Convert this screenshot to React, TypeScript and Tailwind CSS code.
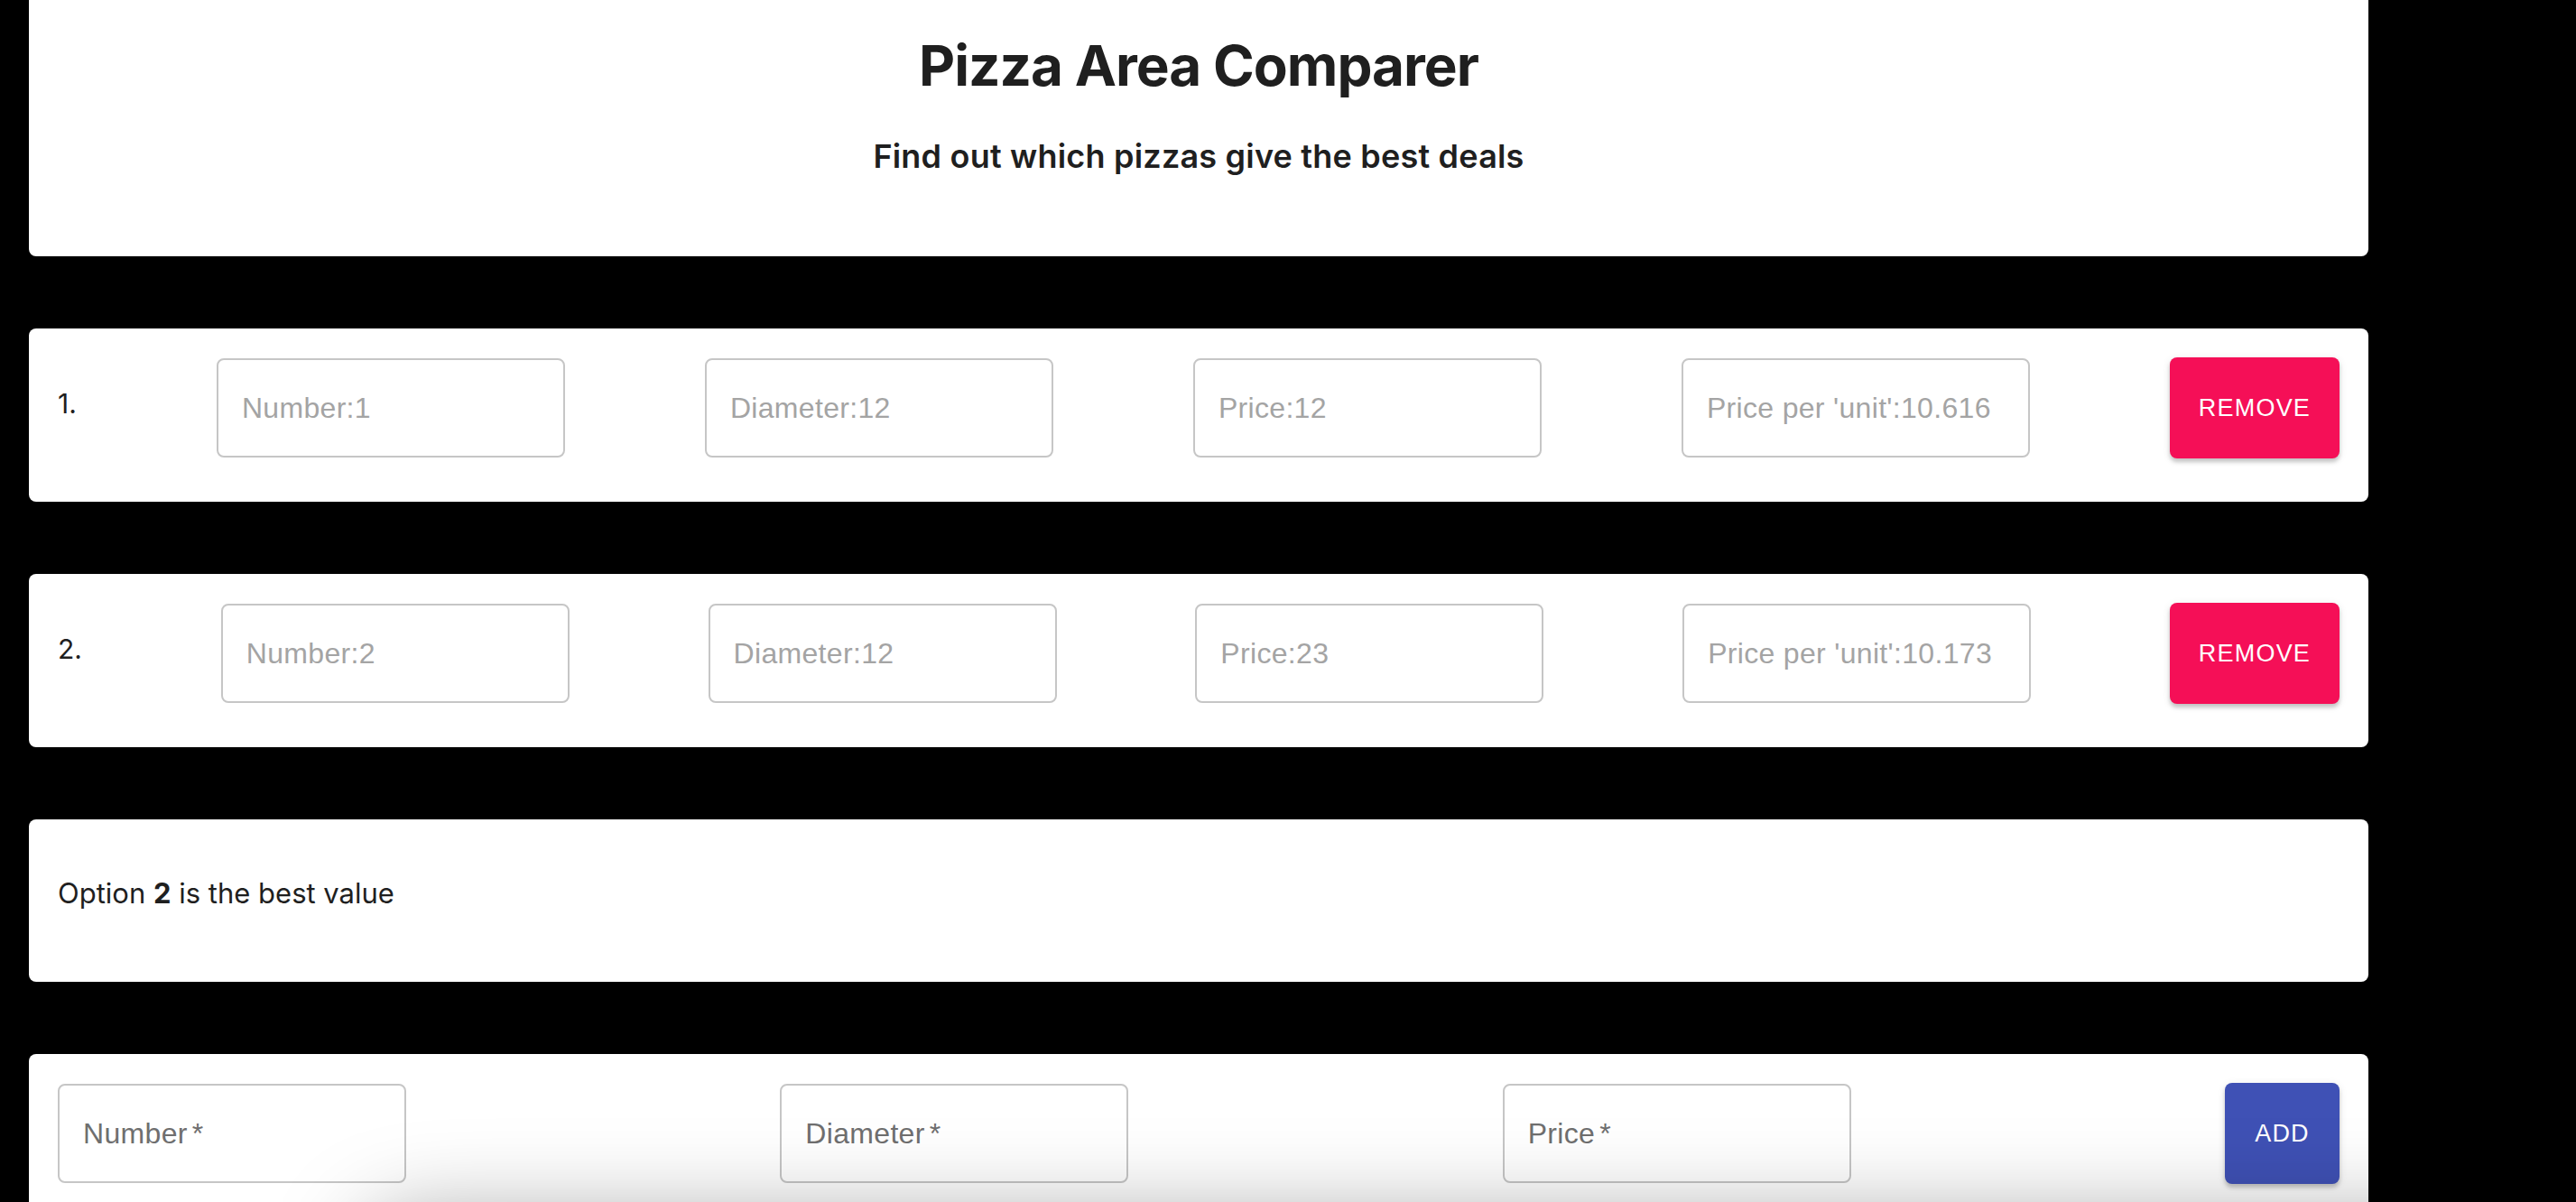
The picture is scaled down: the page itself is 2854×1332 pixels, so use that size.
const rows = [
  { n: 1, number: 1, diameter: 12, price: 12, unit: '10.616' },
  { n: 2, number: 2, diameter: 12, price: 23, unit: '10.173' },
]

const sans = "font-['Inter',sans-serif]"
const helv = "font-['Liberation_Sans','Helvetica',Arial,sans-serif]"

function Field({ placeholder, label }: { placeholder?: string; label?: string }) {
  return (
    <div className="relative w-[386px] h-[110px] rounded-lg border-2 border-[#c6c6c6] bg-transparent flex items-center px-[26px]">
      {label ? (
        <span className={`${helv} text-[32px] tracking-[0.01em] text-[#6f6f6f]`}>
          {label}
          <span className="ml-[5px]">*</span>
        </span>
      ) : (
        <input
          readOnly
          placeholder={placeholder}
          className={`${helv} w-full bg-transparent outline-none text-[32px] tracking-[0.01em] placeholder:text-[#a4a4a4]`}
        />
      )}
    </div>
  )
}

function Card({ children, className = '' }: { children: React.ReactNode; className?: string }) {
  return <div className={`bg-white rounded-lg ${className}`}>{children}</div>
}

export default function App() {
  return (
    <div className="relative w-full h-[1332px] bg-black overflow-hidden">
      <div className="w-[2592px] ml-8 flex flex-col gap-[80px] text-[#1f1f1f]">
        <div className="bg-white rounded-b-lg h-[284px] flex flex-col items-center pt-[35px]">
          <h1 className={`${sans} text-[62px] leading-[76px] font-bold tracking-[-1px]`}>
            Pizza Area Comparer
          </h1>
          <h2 className={`${sans} mt-[40px] text-[36px] leading-[44px] font-semibold tracking-[0.2px]`}>
            Find out which pizzas give the best deals
          </h2>
        </div>

        {rows.map((r) => (
          <Card key={r.n} className="px-8 pt-8 pb-12">
            <div className="flex items-center justify-between">
              <span className={`${sans} text-[30px] mb-[10px]`}>{r.n}.</span>
              <Field placeholder={`Number:${r.number}`} />
              <Field placeholder={`Diameter:${r.diameter}`} />
              <Field placeholder={`Price:${r.price}`} />
              <Field placeholder={`Price per 'unit':${r.unit}`} />
              <button
                className={`${helv} w-[188px] h-[112px] rounded-lg bg-[#f50f57] text-white text-[27px] tracking-[0.045em] shadow-[0_4px_4px_rgba(0,0,0,0.18),0_2px_10px_rgba(0,0,0,0.1)]`}
              >
                REMOVE
              </button>
            </div>
          </Card>
        ))}

        <Card className="h-[180px] px-8 pt-[64px]">
          <p className={`${sans} text-[31px] leading-[36px]`}>
            Option <b className="font-bold">2</b> is the best value
          </p>
        </Card>

        <Card className="px-8 pt-8 pb-12">
          <div className="flex items-center justify-between">
            <Field label="Number" />
            <Field label="Diameter" />
            <Field label="Price" />
            <button
              className={`${helv} w-[127px] h-[112px] rounded-lg bg-[#3f51b5] text-white text-[27px] tracking-[0.045em] shadow-[0_4px_4px_rgba(0,0,0,0.18),0_2px_10px_rgba(0,0,0,0.1)]`}
            >
              ADD
            </button>
          </div>
        </Card>
      </div>

      {/* soft shadow from something just under the fold */}
      <div className="pointer-events-none absolute left-[400px] top-[1350px] w-[2400px] h-[200px] rounded-[60px] shadow-[0_0_100px_0_rgba(0,0,0,0.36)]" />
    </div>
  )
}
